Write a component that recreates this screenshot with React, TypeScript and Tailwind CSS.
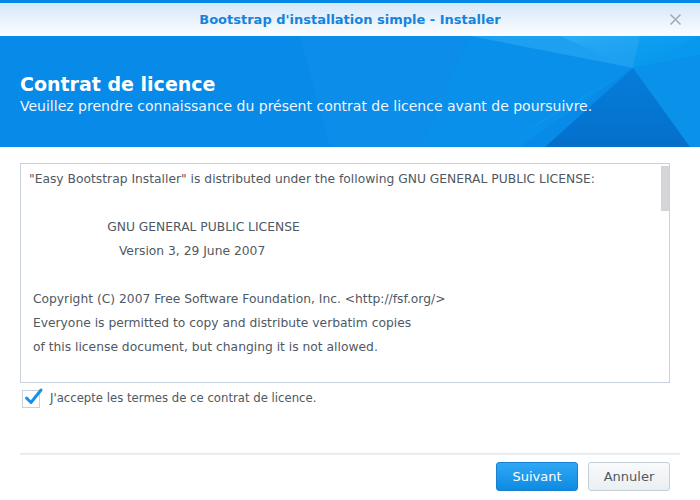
import React from "react";

function Banner() {
  return (
    <div className="relative h-[111px] bg-[#078ae8] overflow-hidden">
      <svg className="absolute inset-0" width="700" height="111" viewBox="0 36 700 111">
        <defs>
          <linearGradient id="g1" x1="0" y1="0" x2="1" y2="1">
            <stop offset="0" stopColor="#38bdf8" stopOpacity="0.55" />
            <stop offset="1" stopColor="#0a8be9" stopOpacity="0" />
          </linearGradient>
          <linearGradient id="g2" x1="0" y1="0" x2="0" y2="1">
            <stop offset="0" stopColor="#005fb8" stopOpacity="0.3" />
            <stop offset="1" stopColor="#004ea8" stopOpacity="0.45" />
          </linearGradient>
        </defs>
        <polygon points="300,36 470,36 420,147 330,147" fill="#1a98ee" opacity="0.25" />
        <polygon points="470,36 633,68 520,147 420,147" fill="#0d96ee" opacity="0.45" />
        <polygon points="470,36 640,36 633,68" fill="#2fb2f6" opacity="0.55" />
        <polygon points="560,36 700,36 633,68" fill="url(#g1)" />
        <polygon points="640,36 700,36 700,55 633,68" fill="#0aa6f4" opacity="0.55" />
        <polygon points="633,68 700,55 700,147 690,147" fill="#0b94ea" opacity="0.7" />
        <polygon points="633,68 690,147 545,147" fill="url(#g2)" />
        <polygon points="560,110 633,68 500,147" fill="#3bbcf8" opacity="0.22" />
      </svg>
      <div className="relative pl-5 pt-[36px] text-white">
        <div className="text-[19px] leading-[24px] font-bold">Contrat de licence</div>
        <div className="text-[14px] leading-[20px] text-[#eef6ff]">
          Veuillez prendre connaissance du présent contrat de licence avant de poursuivre.
        </div>
      </div>
    </div>
  );
}

export default function App() {
  const lines = [
    '"Easy Bootstrap Installer" is distributed under the following GNU GENERAL PUBLIC LICENSE:',
    "",
    "                    GNU GENERAL PUBLIC LICENSE",
    "                       Version 3, 29 June 2007",
    "",
    " Copyright (C) 2007 Free Software Foundation, Inc. <http://fsf.org/>",
    " Everyone is permitted to copy and distribute verbatim copies",
    " of this license document, but changing it is not allowed.",
  ];
  return (
    <div className="w-[700px] h-[500px] bg-white overflow-hidden font-['DejaVu_Sans',sans-serif]">
      <div className="h-[3px] bg-[#0686e6]" />
      <div className="relative h-[33px] bg-gradient-to-b from-[#d5e8f9] to-[#fbfdff] flex items-center justify-center">
        <span className="text-[13px] font-bold text-[#1683db]">Bootstrap d'installation simple - Installer</span>
        <svg className="absolute right-[18px] top-[10px]" width="13" height="13" viewBox="0 0 13 13">
          <path d="M1.5 1.5 L11.5 11.5 M11.5 1.5 L1.5 11.5" stroke="#a3abb3" strokeWidth="1.6" />
        </svg>
      </div>
      <Banner />
      <div className="px-5 pt-[16px]">
        <div className="relative w-[650px] h-[220px] border border-[#c9d2dc] overflow-hidden">
          <div className="pl-[8px] pt-[3px] text-[12.3px] leading-[24px] text-[#4f5963] whitespace-pre">
            {lines.map((l, i) => (
              <div key={i} className="h-[24px]">{l}</div>
            ))}
          </div>
          <div className="absolute right-0 top-[2px] w-[8px] h-[45px] bg-[#d3d5d8]" />
        </div>
        <div className="flex items-center mt-[7px] h-[18px] ml-[2px]">
          <div className="w-[18px] h-[18px] border border-[#c9d2dc] bg-white relative">
            <svg className="absolute left-[1px] -top-[4px]" width="20" height="20" viewBox="0 0 20 20">
              <path d="M2.5 11 L7 15.5 L17 3" stroke="#1b8fe6" strokeWidth="3" fill="none" strokeLinecap="round" strokeLinejoin="round" />
            </svg>
          </div>
          <span className="ml-[10px] text-[11.7px] text-[#4f5963]">J'accepte les termes de ce contrat de licence.</span>
        </div>
        <div className="mt-[45px] h-[2px] bg-gradient-to-b from-[#dfe3e7] to-[#f3f5f7]" />
        <div className="flex justify-end gap-[10px] mt-[7px] pr-[10px]">
          <button className="w-[82px] h-[29px] rounded-[3px] border border-[#1a80d0] bg-gradient-to-b from-[#2fa8f6] to-[#0c8ae2] text-white text-[13px]">
            Suivant
          </button>
          <button className="w-[82px] h-[29px] rounded-[3px] border border-[#c6ced6] bg-gradient-to-b from-[#f8fafc] to-[#eaeff3] text-[#4f5963] text-[13px]">
            Annuler
          </button>
        </div>
      </div>
    </div>
  );
}
